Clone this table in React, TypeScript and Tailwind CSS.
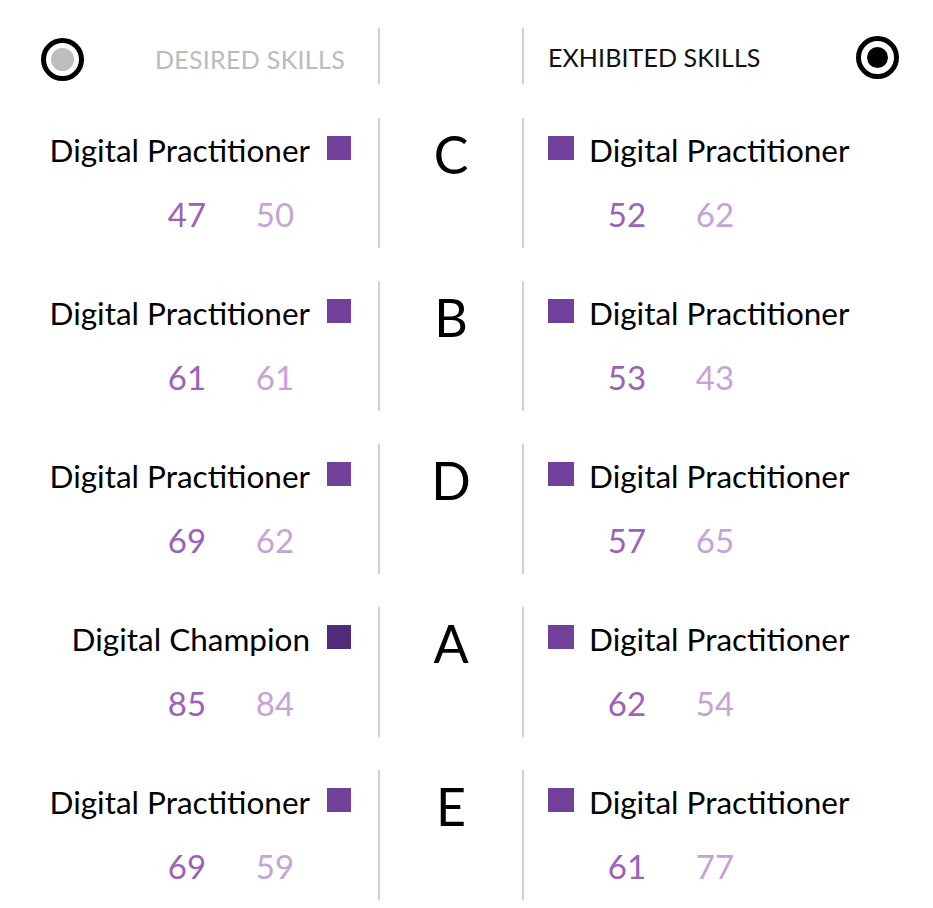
import React from "react";

type Row = {
  letter: string;
  left: { label: string; color: string; a: number; b: number };
  right: { label: string; color: string; a: number; b: number };
};

const rows: Row[] = [
  { letter: "C", left: { label: "Digital Practitioner", color: "bg-[#70409a]", a: 47, b: 50 }, right: { label: "Digital Practitioner", color: "bg-[#70409a]", a: 52, b: 62 } },
  { letter: "B", left: { label: "Digital Practitioner", color: "bg-[#70409a]", a: 61, b: 61 }, right: { label: "Digital Practitioner", color: "bg-[#70409a]", a: 53, b: 43 } },
  { letter: "D", left: { label: "Digital Practitioner", color: "bg-[#70409a]", a: 69, b: 62 }, right: { label: "Digital Practitioner", color: "bg-[#70409a]", a: 57, b: 65 } },
  { letter: "A", left: { label: "Digital Champion", color: "bg-[#522a7c]", a: 85, b: 84 }, right: { label: "Digital Practitioner", color: "bg-[#70409a]", a: 62, b: 54 } },
  { letter: "E", left: { label: "Digital Practitioner", color: "bg-[#70409a]", a: 69, b: 59 }, right: { label: "Digital Practitioner", color: "bg-[#70409a]", a: 61, b: 77 } },
];

function Radio({ selected }: { selected: boolean }) {
  return (
    <div className="w-[43px] h-[43px] rounded-full border-[5px] border-black flex items-center justify-center">
      <div className={selected ? "w-[21px] h-[21px] rounded-full bg-black" : "w-[23px] h-[23px] rounded-full bg-[#bdbdbd]"} />
    </div>
  );
}

function Numbers({ a, b }: { a: number; b: number }) {
  return (
    <div className="flex text-[33px] leading-none">
      <div className="w-[88px] text-center text-[#9b62b6]">{a}</div>
      <div className="w-[88px] text-center text-[#c6a3d7]">{b}</div>
    </div>
  );
}

export default function App() {
  return (
    <div className="w-[933px] h-[908px] bg-white text-black" style={{ fontFamily: "Lato, 'Liberation Sans', sans-serif" }}>
      {/* header */}
      <div className="flex h-[101px]">
        <div className="w-[378px] flex items-center pl-[41px] pr-[33px] pt-[18px]">
          <Radio selected={false} />
          <div className="ml-auto text-[25px] leading-none text-[#bbbbbb] tracking-[0.3px]">DESIRED SKILLS</div>
        </div>
        <div className="w-[146px] pt-[28px] pb-[17px]">
          <div className="h-full border-x-2 border-[#d0d0d0]" />
        </div>
        <div className="flex-1 flex items-center pl-[24px] pr-[34px] pt-[14px]">
          <div className="text-[25px] leading-none text-[#111] tracking-[0.1px]">EXHIBITED SKILLS</div>
          <div className="ml-auto">
            <Radio selected={true} />
          </div>
        </div>
      </div>
      {rows.map((r) => (
        <div key={r.letter} className="flex h-[163px]">
          <div className="w-[378px] flex flex-col items-end pt-[31px] pr-[27px]">
            <div className="flex items-center gap-[17px] h-[38px]">
              <span className="text-[31.5px] leading-none">{r.left.label}</span>
              <span className={`w-[24px] h-[24px] mb-[6px] ${r.left.color}`} />
            </div>
            <div className="mt-[28px] mr-[32px]">
              <Numbers a={r.left.a} b={r.left.b} />
            </div>
          </div>
          <div className="w-[146px] pt-[17px] pb-[16px]">
            <div className="h-full border-x-2 border-[#d0d0d0] flex justify-center pt-[10px]">
              <span className="text-[52px] leading-none">{r.letter}</span>
            </div>
          </div>
          <div className="flex-1 flex flex-col items-start pt-[31px] pl-[24px]">
            <div className="flex items-center gap-[15px] h-[38px]">
              <span className={`w-[26px] h-[24px] mb-[6px] ${r.right.color}`} />
              <span className="text-[31.5px] leading-none">{r.right.label}</span>
            </div>
            <div className="mt-[28px] ml-[35px]">
              <Numbers a={r.right.a} b={r.right.b} />
            </div>
          </div>
        </div>
      ))}
    </div>
  );
}
